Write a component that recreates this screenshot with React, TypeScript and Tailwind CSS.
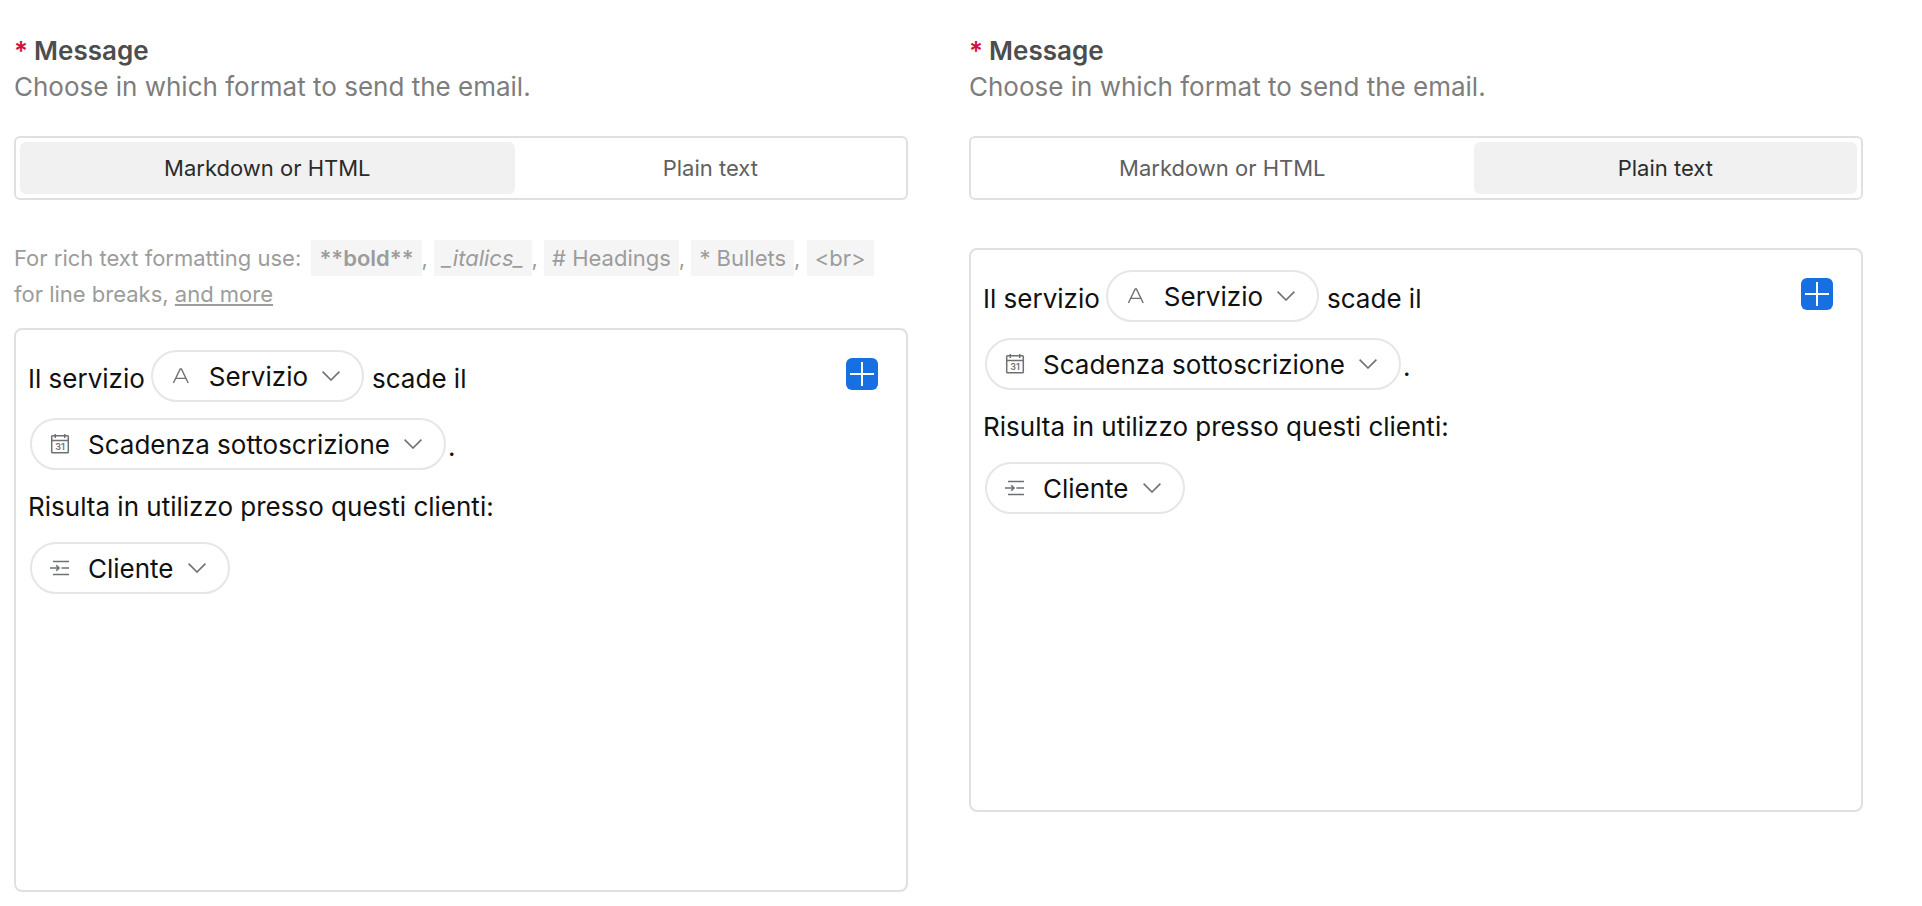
import React, { useState } from 'react';

type Format = 'markdown' | 'plain';

interface ChipProps {
    icon: React.ReactNode;
    label: string;
}

function TextIcon() {
    return (
        <svg width="20" height="20" viewBox="0 0 20 20" fill="none" stroke="#6e7074" strokeWidth="1.4" aria-hidden="true">
            <path d="M2.4 17L9.2 3h1.2l6.8 14M5 12.4h9.6" />
        </svg>
    );
}

function CalendarIcon() {
    return (
        <svg width="20" height="20" viewBox="0 0 20 20" fill="none" stroke="#6e7074" strokeWidth="1.5" aria-hidden="true">
            <rect x="1.7" y="1.8" width="16.6" height="17" rx="0.8" />
            <path d="M1.7 6.4h16.6M5.3 0v4M14.7 0v4" />
            <text x="10" y="15.8" textAnchor="middle" fontSize="9" fontWeight="600" fill="#6e7074" stroke="none">31</text>
        </svg>
    );
}

function LinkedRecordIcon() {
    return (
        <svg width="20" height="20" viewBox="0 0 20 20" fill="none" stroke="#6e7074" strokeWidth="1.6" aria-hidden="true">
            <path d="M3 3.5h16M3 16.5h16M11.4 10H19M0 10h9M6.2 7.2L9 10l-2.8 2.8" />
        </svg>
    );
}

function Chip({ icon, label }: ChipProps) {
    return (
        <button type="button" className="my-2 flex h-[52px] items-center rounded-full border-2 border-[#e6e6e6] bg-white pr-[22px] pl-[18px]">
            {icon}
            <span className="ml-[18px]">{label}</span>
            <svg className="ml-3.5" width="18" height="10" viewBox="0 0 18 10" fill="none" stroke="#6e7074" strokeWidth="1.6" aria-hidden="true">
                <path d="M0.6 0.6L9 9l8.4-8.4" />
            </svg>
        </button>
    );
}

function Code({ children }: { children: React.ReactNode }) {
    return <span className="inline-block bg-[#f5f5f5] px-2">{children}</span>;
}

function MessageField({ id, initialFormat }: { id: string; initialFormat: Format }) {
    const [format, setFormat] = useState<Format>(initialFormat);

    const tabs: { value: Format; label: string }[] = [
        { value: 'markdown', label: 'Markdown or HTML' },
        { value: 'plain', label: 'Plain text' },
    ];

    return (
        <section>
            <h2 id={id} className="text-[26px] leading-9 font-semibold text-[#4d4d4d]">
                <span className="mr-1.5 text-[#d3103f]">*</span>
                Message
            </h2>
            <p className="text-[26px] leading-9 text-[#7d7d7d]">Choose in which format to send the email.</p>

            <div role="tablist" aria-labelledby={id} className="mt-[31px] flex gap-1 rounded-md border-2 border-[#e0e0e0] p-1">
                {tabs.map((tab) => (
                    <button
                        key={tab.value}
                        type="button"
                        role="tab"
                        aria-selected={format === tab.value}
                        onClick={() => setFormat(tab.value)}
                        className={`h-[52px] flex-auto rounded-md text-[22px] ${format === tab.value ? 'bg-[#f1f1f1] text-[#2b2b2b]' : 'text-[#606060]'}`}
                    >
                        {tab.label}
                    </button>
                ))}
            </div>

            {format === 'markdown' && (
                <p className="mt-10 pr-6 text-[22px] leading-9 text-[#9c9c9c]">
                    <span className="mr-1">For rich text formatting use:</span>{' '}
                    <Code><strong className="font-semibold">**bold**</strong></Code>,{' '}
                    <Code><em>_italics_</em></Code>, <Code># Headings</Code>, <Code>* Bullets</Code>,{' '}
                    <Code>&lt;br&gt;</Code> for line breaks,{' '}
                    <a href="#" className="underline decoration-2 underline-offset-2">and more</a>
                </p>
            )}

            <div className={`flex min-h-[564px] items-start rounded-lg border-2 border-[#e0e0e0] text-[26px] text-[#111111] ${format === 'markdown' ? 'mt-4' : 'mt-12'}`}>
                <div className="flex-1 py-3 pl-3">
                    <div className="flex items-center">
                        <span className="mr-1.5 pt-1">Il servizio</span>
                        <Chip icon={<TextIcon />} label="Servizio" />
                        <span className="ml-2 pt-1">scade il</span>
                    </div>
                    <div className="ml-0.5 flex items-center">
                        <Chip icon={<CalendarIcon />} label="Scadenza sottoscrizione" />
                        <span className="ml-0.5 pt-1">.</span>
                    </div>
                    <p className="pt-0.5 leading-[54px]">Risulta in utilizzo presso questi clienti:</p>
                    <div className="ml-0.5 flex items-center">
                        <Chip icon={<LinkedRecordIcon />} label="Cliente" />
                    </div>
                </div>
                <button type="button" aria-label="Insert field" className="mt-7 mr-7 flex size-8 items-center justify-center rounded-md bg-[#1670e2]">
                    <svg width="24" height="24" viewBox="0 0 24 24" stroke="#ffffff" strokeWidth="2" aria-hidden="true">
                        <path d="M12 0v24M0 12h24" />
                    </svg>
                </button>
            </div>
        </section>
    );
}

export default function App() {
    return (
        <main className="grid grid-cols-2 items-start gap-[61px] bg-white pt-[33px] pr-[59px] pl-[14px] font-['Inter',sans-serif]">
            <MessageField id="message-markdown" initialFormat="markdown" />
            <MessageField id="message-plain" initialFormat="plain" />
        </main>
    );
}
